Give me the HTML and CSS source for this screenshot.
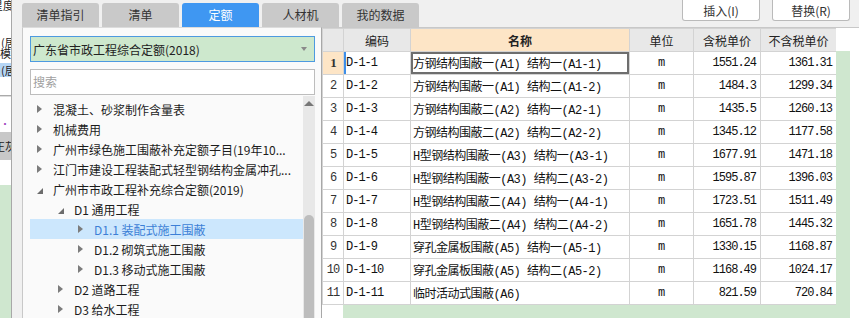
FILE: index.html
```html
<!DOCTYPE html>
<html lang="zh-CN">
 <head>
  <meta charset="utf-8">
  <link rel="stylesheet" href="styles.css">
 </head>
 <body>
  <div class="app">

   <div class="strip">
    <div class="s-top">星度</div>
    <div class="s-a">(居</div>
    <div class="s-b">模</div>
    <div class="s-sel">(居</div>
    <div class="s-rule"></div>
    <div class="s-dots">··</div>
    <div class="s-band">正灰</div>
    <div class="s-green"></div>
   </div>

   <div class="main">
    <div class="topbar">
     <div class="tabs">
      <div class="tab">清单指引</div>
      <div class="tab">清单</div>
      <div class="tab active">定额</div>
      <div class="tab">人材机</div>
      <div class="tab">我的数据</div>
     </div>
     <div class="actions">
      <button>插入(I)</button>
      <button>替换(R)</button>
     </div>
    </div><!-- topbar -->

    <div class="content">
     <div class="lib">
      <div class="select">广东省市政工程综合定额(2018)<span class="caret"></span></div>
      <div class="search">搜索</div>
      <div class="tree-wrap">
       <ul class="tree">
        <li class="lv0"><i class="arr"></i>混凝土、砂浆制作含量表</li>
        <li class="lv0"><i class="arr"></i>机械费用</li>
        <li class="lv0"><i class="arr"></i>广州市绿色施工围蔽补充定额子目(19年10...</li>
        <li class="lv0"><i class="arr"></i>江门市建设工程装配式轻型钢结构金属冲孔...</li>
        <li class="lv0"><i class="arr open"></i>广州市市政工程补充综合定额(2019)</li>
        <li class="lv1"><i class="arr open"></i>D1 通用工程</li>
        <li class="lv2 selected"><i class="arr"></i>D1.1 装配式施工围蔽</li>
        <li class="lv2"><i class="arr"></i>D1.2 砌筑式施工围蔽</li>
        <li class="lv2"><i class="arr"></i>D1.3 移动式施工围蔽</li>
        <li class="lv1"><i class="arr"></i>D2 道路工程</li>
        <li class="lv1"><i class="arr"></i>D3 给水工程</li>
       </ul>
       <div class="vscroll"><span class="up"></span><span class="thumb"></span></div>
      </div>
     </div><!-- lib -->

     <div class="sheet-wrap">
      <div class="sheet">
       <table>
        <colgroup>
         <col class="c-num"><col class="c-code"><col class="c-name">
         <col class="c-unit"><col class="c-price"><col class="c-price2">
        </colgroup>
        <thead>
         <tr><th></th><th>编码</th><th class="hot">名称</th><th>单位</th><th>含税单价</th><th>不含税单价</th></tr>
        </thead>
        <tbody>
         <tr class="current"><td class="num">1</td><td class="code">D-1-1</td><td class="name">方钢结构围蔽一(A1) 结构一(A1-1)</td><td class="unit">m</td><td class="price">1551.24</td><td class="price">1361.31</td></tr>
         <tr><td class="num">2</td><td class="code">D-1-2</td><td class="name">方钢结构围蔽一(A1) 结构二(A1-2)</td><td class="unit">m</td><td class="price">1484.3</td><td class="price">1299.34</td></tr>
         <tr><td class="num">3</td><td class="code">D-1-3</td><td class="name">方钢结构围蔽二(A2) 结构一(A2-1)</td><td class="unit">m</td><td class="price">1435.5</td><td class="price">1260.13</td></tr>
         <tr><td class="num">4</td><td class="code">D-1-4</td><td class="name">方钢结构围蔽二(A2) 结构二(A2-2)</td><td class="unit">m</td><td class="price">1345.12</td><td class="price">1177.58</td></tr>
         <tr><td class="num">5</td><td class="code">D-1-5</td><td class="name">H型钢结构围蔽一(A3) 结构一(A3-1)</td><td class="unit">m</td><td class="price">1677.91</td><td class="price">1471.18</td></tr>
         <tr><td class="num">6</td><td class="code">D-1-6</td><td class="name">H型钢结构围蔽一(A3) 结构二(A3-2)</td><td class="unit">m</td><td class="price">1595.87</td><td class="price">1396.03</td></tr>
         <tr><td class="num">7</td><td class="code">D-1-7</td><td class="name">H型钢结构围蔽二(A4) 结构一(A4-1)</td><td class="unit">m</td><td class="price">1723.51</td><td class="price">1511.49</td></tr>
         <tr><td class="num">8</td><td class="code">D-1-8</td><td class="name">H型钢结构围蔽二(A4) 结构二(A4-2)</td><td class="unit">m</td><td class="price">1651.78</td><td class="price">1445.32</td></tr>
         <tr><td class="num">9</td><td class="code">D-1-9</td><td class="name">穿孔金属板围蔽(A5) 结构一(A5-1)</td><td class="unit">m</td><td class="price">1330.15</td><td class="price">1168.87</td></tr>
         <tr><td class="num">10</td><td class="code">D-1-10</td><td class="name">穿孔金属板围蔽(A5) 结构二(A5-2)</td><td class="unit">m</td><td class="price">1168.49</td><td class="price">1024.17</td></tr>
         <tr><td class="num">11</td><td class="code">D-1-11</td><td class="name">临时活动式围蔽(A6)</td><td class="unit">m</td><td class="price">821.59</td><td class="price">720.84</td></tr>
        </tbody>
       </table>
       <div class="filler"><div class="f-num"></div><div class="f-green"></div></div>
      </div>
      <div class="gutter"></div>
      <div class="edge"></div>
     </div><!-- sheet-wrap -->
    </div><!-- content -->
   </div><!-- main -->

  </div>
 </body>
</html>
```

FILE: styles.css
```css
*{box-sizing:border-box;margin:0;padding:0}
html,body{height:100%;overflow:hidden}
body{background:#f0f0f0;font-family:"Noto Sans CJK SC","Microsoft YaHei",sans-serif;font-size:12px;color:#222}
.app{display:flex;height:318px}

/* cut-off panel on the far left */
.strip{width:12px;border-right:1px solid #a8a8a8;background:#fff;margin-right:10px;display:flex;flex-flow:column;overflow:hidden;white-space:nowrap;font-size:11px}
.strip div{flex:none;overflow:hidden}
.s-top{height:12px;line-height:10px;text-indent:-8px}
.s-a{margin-top:24px;height:12px;line-height:12px;text-indent:1px}
.s-b{height:11px;line-height:11px}
.s-sel{margin-top:4px;height:14px;line-height:14px;background:#b6d6f6;text-indent:1px}
.s-rule{margin-top:18px;height:2px;border-top:1px solid #aaa;border-bottom:1px solid #ddd}
.s-dots{margin-top:24px;height:8px;line-height:6px;color:#a040c0;font-size:10px}
.s-band{margin-top:3px;height:28px;line-height:28px;background:#c8c8c8;text-indent:-6px}
.s-green{margin-top:25px;flex:1 !important;background:#cfe7cf}

.main{flex:1;display:flex;flex-flow:column;min-width:0}
.topbar{height:27px;display:flex;align-items:flex-start;flex:none}
.tabs{display:flex;gap:3px;padding-top:3px}
.tab{width:77px;height:24px;line-height:24px;text-align:center;background:#c9c9c9;color:#333;border-radius:3px 3px 0 0}
.tab.active{background:#3f97f2;color:#fff}
.actions{margin-left:auto;margin-right:9px;display:flex;gap:12px}
.actions button{width:78px;height:21px;background:#fff;border:1px solid #bababa;border-top:0;border-radius:0 0 3px 3px;font:inherit;color:#333}

.content{flex:1;display:flex;min-height:0}

/* library tree */
.lib{width:299px;flex:none;background:#fafafa;border-left:1px solid #c8c8c8;border-top:1px solid #dcdcdc;padding:8px 6px 0 7px;display:flex;flex-flow:column}
.select{height:26px;flex:none;display:flex;align-items:center;justify-content:space-between;padding:0 7px 0 2px;background:#cde8cd;border:1px solid #4d9ae0}
.caret{width:0;height:0;border-top:4px solid #8a8a8a;border-left:3px solid transparent;border-right:3px solid transparent}
.search{height:26px;flex:none;margin-top:7px;line-height:24px;padding-left:2px;background:#fff;border:1px solid #bdbdbd;color:#a0a0a0}
.tree-wrap{flex:1;min-height:0;margin-top:1px;display:flex;overflow:hidden}
.tree{flex:1;list-style:none;padding-top:3px}
.tree li{height:20px;display:flex;align-items:center;white-space:nowrap;color:#1c1c1c}
.tree .lv0{padding-left:7px}
.tree .lv1{padding-left:28px}
.tree .lv2{padding-left:48px}
.tree .selected{background:#cce7fd;color:#3c7fd6}
.arr{width:16px;height:20px;flex:none;display:flex;align-items:center}
.arr::before{content:"";width:0;height:0;border-left:5px solid #7c7c7c;border-top:4px solid transparent;border-bottom:4px solid transparent}
.arr.open::before{border-left:0;border-bottom:0;border-right:6px solid #6c6c6c;border-top:6px solid transparent;margin-top:4px}
.vscroll{width:12px;flex:none;background:#e8e8e8;display:flex;flex-flow:column;align-items:center;padding-top:5px}
.up{width:0;height:0;border-bottom:5px solid #777;border-left:5px solid transparent;border-right:5px solid transparent}
.thumb{margin-top:auto;width:10px;height:103px;background:#bdbdbd;border-radius:5px 5px 0 0}

/* price sheet */
.sheet-wrap{flex:1;display:flex;background:#fff;border-left:1px solid #a8a8a8;border-top:1px solid #c8c8c8}
.sheet{width:514px;flex:none;display:flex;flex-flow:column}
table{width:514px;table-layout:fixed;border-collapse:collapse}
.c-num{width:21px}.c-code{width:67px}.c-name{width:219px}.c-unit{width:64px}.c-price{width:67px}.c-price2{width:76px}
tr{height:23px}
th,td{border:1px solid #d3d3d3;white-space:nowrap;overflow:hidden;padding:0}
th{background:#e8e8e8;font-weight:normal;color:#222}
th.hot{background:#fde5c6;font-weight:bold}
td{font-family:"Liberation Mono","Noto Sans CJK SC",monospace;font-size:12px;color:#111}
td.num{text-align:center;letter-spacing:-1px;color:#333}
td.code{padding-left:2px;letter-spacing:-1px}
td.name{padding-left:2px;letter-spacing:-0.5px}
td.unit{text-align:center}
td.price{text-align:right;padding-right:4px;letter-spacing:-1px}
tr.current td.num{background:#fde5c6;font-weight:bold;font-family:"Liberation Serif",serif;font-size:13px}
tr.current td.code{box-shadow:inset 2px 0 0 #3d8ee8}
tr.current td.name{box-shadow:inset 0 0 0 2px #6e6e6e}
.filler{flex:1;display:flex}
.f-num{width:21px;background:#fff}
.f-green{flex:1;background:#cfe7cf}
.gutter{width:14px;flex:none;background:#cfe7cf;border-top:23px solid #fff}
.edge{flex:1;background:#fff}
```
